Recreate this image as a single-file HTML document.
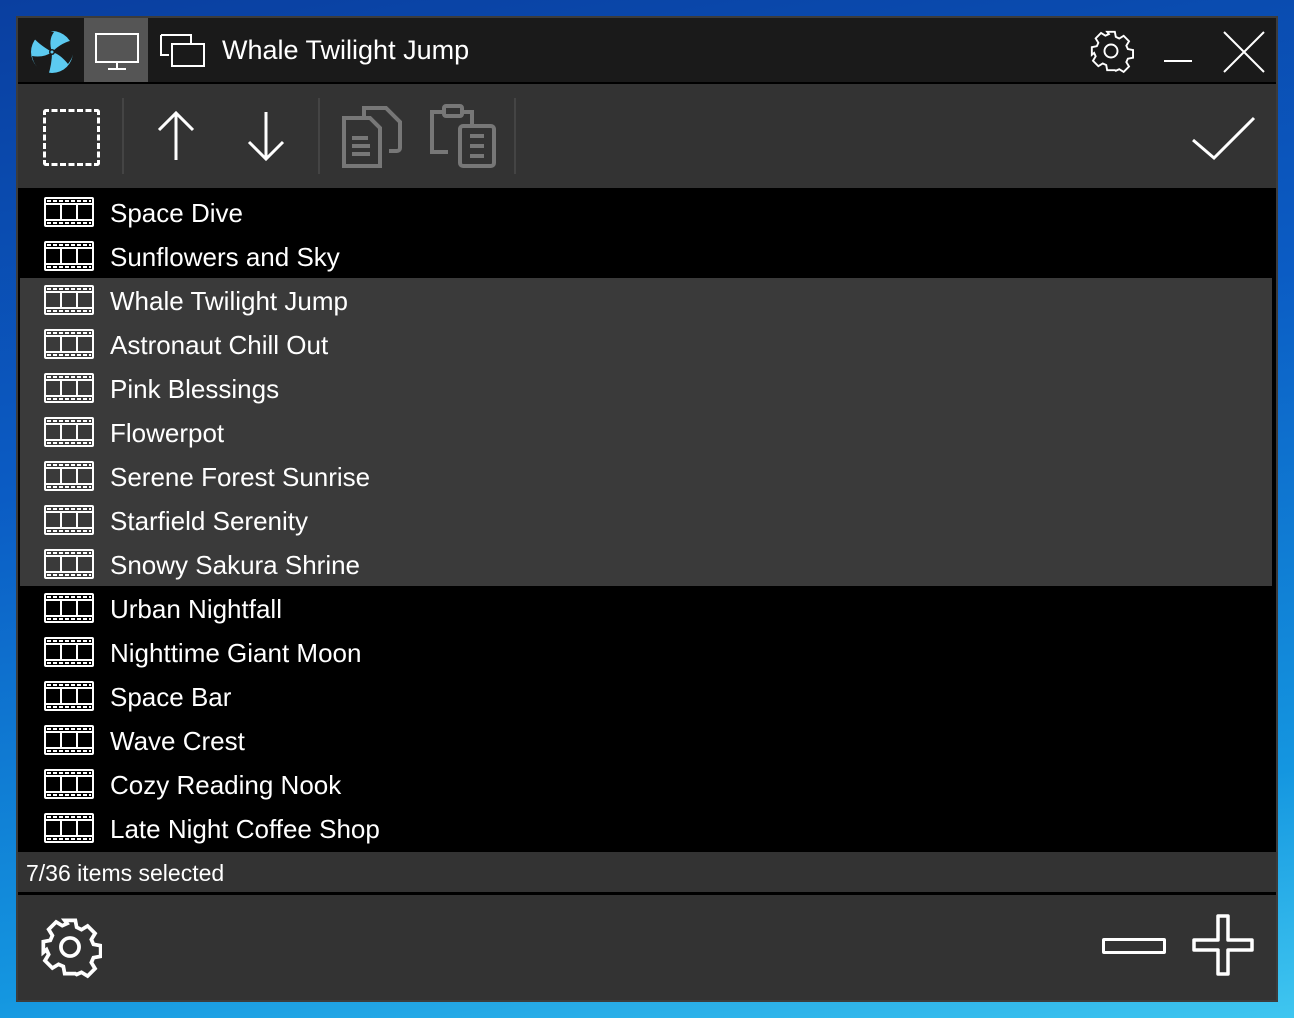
<!DOCTYPE html>
<html><head><style>
body{margin:0;width:1294px;height:1018px;overflow:hidden;background:linear-gradient(170deg,#0a3fa0 0%,#0b5cc4 40%,#1496e0 80%,#3fc6f0 100%);font-family:"Liberation Sans",sans-serif;position:relative}
.win{position:absolute;left:16px;top:16px;width:1258px;height:982px;border:2px solid #3c3c3c;background:#333}
.title{position:absolute;left:0;top:0;width:1258px;height:64px;background:#1a1a1a;border-bottom:2px solid #000}
.tb{position:absolute;left:0;top:66px;width:1258px;height:104px;background:#333}
.list{position:absolute;left:0;top:170px;width:1258px;height:664px;background:#000}
.row{position:absolute;left:0;height:44px;width:1254px;color:#fff;font-size:26px;line-height:44px}
.row.sel{background:#3a3a3a}
.row svg{position:absolute;left:26px;top:7px}
.row span{position:absolute;left:92px;top:1px}
.status{position:absolute;left:0;top:834px;width:1258px;height:40px;background:#333;border-bottom:3px solid #000;color:#fff;font-size:23px;line-height:42px;text-indent:8px}
.bot{position:absolute;left:0;top:877px;width:1258px;height:105px;background:#333}
</style></head><body>
<div class="win">
<div class="title">
 <svg style="position:absolute;left:8px;top:6px" width="52" height="52" viewBox="0 0 52 52"><circle cx="26" cy="28" r="21" fill="#5ccaf0"/><path d="M26 28 Q12 20 6 12 Q18 4 28 8 Q22 16 26 28Z M26 28 Q36 18 48 16 Q50 30 42 40 Q34 30 26 28Z M26 28 Q26 40 22 52 Q8 44 6 32 Q18 34 26 28Z" fill="#1a1a1a"/><circle cx="26" cy="28" r="3" fill="#1a1a1a"/><circle cx="26" cy="28" r="1.5" fill="#5ccaf0"/></svg>
 <div style="position:absolute;left:66px;top:0;width:64px;height:64px;background:#555"></div>
 <svg style="position:absolute;left:76px;top:14px" width="46" height="40"><rect x="2" y="2" width="42" height="28" fill="none" stroke="#fff" stroke-width="2"/><path d="M23 30v6M14 37h18" stroke="#fff" stroke-width="2"/></svg>
 <svg style="position:absolute;left:142px;top:16px" width="46" height="34"><path d="M1 1h30v8M1 1v20h8" fill="none" stroke="#fff" stroke-width="2"/><rect x="12" y="10" width="32" height="22" fill="none" stroke="#fff" stroke-width="2"/></svg>
 <div style="position:absolute;left:204px;top:17px;color:#fff;font-size:27px">Whale Twilight Jump</div>
 <svg style="position:absolute;left:1070px;top:10px" width="46" height="46" viewBox="0 0 24 24"><path fill="none" stroke="#fff" stroke-width="1" d="M10 2h4l.5 2.6 1.8.9 2.3-1.4 2.8 2.8-1.4 2.3.8 1.8 2.7.5v4l-2.7.5-.8 1.8 1.4 2.3-2.8 2.8-2.3-1.4-1.8.8L14 22h-4l-.5-2.7-1.8-.8-2.3 1.4-2.8-2.8 1.4-2.3-.8-1.8L2 14v-4l2.6-.5.8-1.8L4 5.4 6.8 2.6 9.1 4l1.8-.8z"/><circle cx="12" cy="12" r="3.4" fill="none" stroke="#fff" stroke-width="1"/></svg>
 <div style="position:absolute;left:1146px;top:42px;width:28px;height:2px;background:#fff"></div>
 <svg style="position:absolute;left:1204px;top:12px" width="44" height="44"><path d="M2 2L42 42M42 2L2 42" stroke="#fff" stroke-width="2"/></svg>
</div>
<div class="tb">
 <div style="position:absolute;left:25px;top:25px;width:51px;height:51px;border:3px dashed #fff;border-radius:3px"></div>
 <div style="position:absolute;left:104px;top:14px;width:2px;height:76px;background:#444"></div>
 <svg style="position:absolute;left:138px;top:26px" width="40" height="52"><path d="M20 50V3M3 20L20 3L37 20" fill="none" stroke="#fff" stroke-width="3"/></svg>
 <svg style="position:absolute;left:228px;top:26px" width="40" height="52"><path d="M20 2V49M3 32L20 49L37 32" fill="none" stroke="#fff" stroke-width="3"/></svg>
 <div style="position:absolute;left:300px;top:14px;width:2px;height:76px;background:#444"></div>
 <svg style="position:absolute;left:322px;top:18px" width="66" height="68" fill="none" stroke="#777" stroke-width="4"><path d="M24 14V6h22l14 14v26a3 3 0 0 1-3 3h-8"/><path d="M4 16h26l10 10v38H4z"/><path d="M12 36h16M12 44h18M12 52h18" /></svg>
 <svg style="position:absolute;left:412px;top:18px" width="68" height="68" fill="none" stroke="#777" stroke-width="4"><path d="M18 50H2V10h12M30 10h12v12"/><rect x="14" y="4" width="18" height="10" rx="2"/><rect x="30" y="24" width="34" height="40" rx="3"/><path d="M40 34h14M40 44h14M40 54h14"/></svg>
 <div style="position:absolute;left:496px;top:14px;width:2px;height:76px;background:#444"></div>
 <svg style="position:absolute;left:1172px;top:28px" width="68" height="50"><path d="M3 28L24 46L64 6" fill="none" stroke="#fff" stroke-width="3"/></svg>
</div>
<div class="list" id="L"></div>
<div class="status">7/36 items selected</div>
<div class="bot">
 <svg style="position:absolute;left:20px;top:20px" width="64" height="64" viewBox="0 0 24 24"><path fill="none" stroke="#fff" stroke-width="1.4" d="M10 2h4l.5 2.6 1.8.9 2.3-1.4 2.8 2.8-1.4 2.3.8 1.8 2.7.5v4l-2.7.5-.8 1.8 1.4 2.3-2.8 2.8-2.3-1.4-1.8.8L14 22h-4l-.5-2.7-1.8-.8-2.3 1.4-2.8-2.8 1.4-2.3-.8-1.8L2 14v-4l2.6-.5.8-1.8L4 5.4 6.8 2.6 9.1 4l1.8-.8z"/><circle cx="12" cy="12" r="3.4" fill="none" stroke="#fff" stroke-width="1.4"/></svg>
 <div style="position:absolute;left:1084px;top:43px;width:58px;height:10px;border:3px solid #fff;border-radius:2px"></div>
 <svg style="position:absolute;left:1174px;top:19px" width="66" height="66"><path d="M26 2h10v24h24v10H36v24H26V36H2V26h24z" fill="none" stroke="#fff" stroke-width="3.5" stroke-linejoin="round"/></svg>
</div>
</div>
<script>
var n=["Space Dive","Sunflowers and Sky","Whale Twilight Jump","Astronaut Chill Out","Pink Blessings","Flowerpot","Serene Forest Sunrise","Starfield Serenity","Snowy Sakura Shrine","Urban Nightfall","Nighttime Giant Moon","Space Bar","Wave Crest","Cozy Reading Nook","Late Night Coffee Shop"];
var ic='<svg width="50" height="30"><rect x="1" y="1" width="48" height="28" rx="1" fill="none" stroke="#fff" stroke-width="2"/><path d="M1 7h48M1 23h48M17 7v16M33 7v16" stroke="#fff" stroke-width="2"/><path d="M3 4h44M3 26h44" stroke="#fff" stroke-width="2" stroke-dasharray="4 2"/></svg>';
var h='';n.forEach(function(t,i){var s=i>=2&&i<=8;h+='<div class="row'+(s?' sel':'')+'" style="top:'+(2+i*44)+'px;'+(s?'left:2px;width:1252px':'')+'">'+ic.replace('<svg','<svg style="left:'+(s?24:26)+'px"')+'<span'+(s?' style="left:90px"':'')+'>'+t+'</span></div>'});
document.getElementById('L').innerHTML=h;
</script>
</body></html>
